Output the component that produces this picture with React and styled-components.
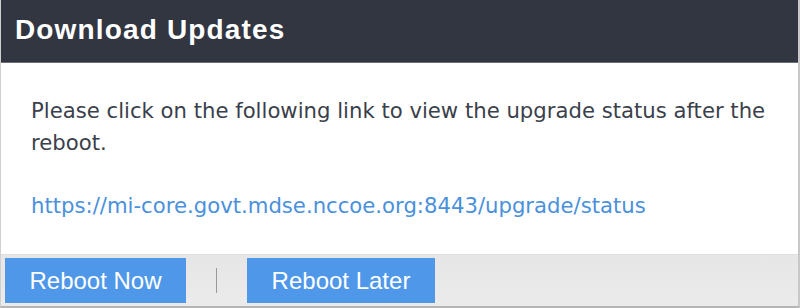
import React from "react";
import styled, { createGlobalStyle } from "styled-components";

const GlobalStyle = createGlobalStyle`
  html, body {
    margin: 0;
    padding: 0;
    background: #ffffff;
  }
  * {
    box-sizing: border-box;
  }
`;

const App = () => {
  return (
    <>
      <GlobalStyle />
      <Dialog>
        <Header>
          <Title>Download Updates</Title>
        </Header>
        <Body>
          <Message>
            Please click on the following link to view the upgrade status after the
            reboot.
          </Message>
          <StatusLink href="#">
            https://mi-core.govt.mdse.nccoe.org:8443/upgrade/status
          </StatusLink>
        </Body>
        <Footer>
          <Button>Reboot Now</Button>
          <Divider />
          <Button wide>Reboot Later</Button>
        </Footer>
      </Dialog>
    </>
  );
};

const Dialog = styled.div`
  width: 800px;
  height: 308px;
  display: flex;
  flex-direction: column;
  background-color: white;
  border-left: 1px solid #cfcfcf;
  border-right: 2px solid #c8c8c8;
  border-bottom: 2px solid #b5b5b5;
`;

const Header = styled.div`
  height: 63px;
  flex-shrink: 0;
  display: flex;
  align-items: center;
  padding: 0 0 2px 14px;
  background-color: #323641;
  border-bottom: 1px solid #6b6e76;
`;

const Title = styled.h1`
  margin: 0;
  font-family: "Liberation Sans", Arial, sans-serif;
  font-size: 28px;
  font-weight: bold;
  letter-spacing: 1.15px;
  color: #ffffff;
`;

const Body = styled.div`
  flex: 1;
  padding: 32px 0 0 30px;
  font-family: "DejaVu Sans", Tahoma, sans-serif;
  font-size: 21.2px;
  line-height: 32px;
`;

const Message = styled.p`
  width: 750px;
  margin: 0 0 31px 0;
  color: #3a3f4b;
`;

const StatusLink = styled.a`
  color: #4a90dc;
  text-decoration: none;
`;

const Footer = styled.div`
  height: 52px;
  flex-shrink: 0;
  display: flex;
  align-items: center;
  gap: 30px;
  padding: 0 0 0 4px;
  background: linear-gradient(#e6e6e6, #ebebeb);
  border-top: 1px solid #dedede;
`;

const Button = styled.button`
  width: ${(props) => (props.wide ? "188px" : "181px")};
  height: 45px;
  border: none;
  border-radius: 0;
  background-color: #4f97e8;
  color: #ffffff;
  font-family: "Liberation Sans", Arial, sans-serif;
  font-size: 24px;
  cursor: pointer;
`;

const Divider = styled.span`
  width: 1px;
  height: 25px;
  background-color: #9a9a9a;
`;

export default App;
